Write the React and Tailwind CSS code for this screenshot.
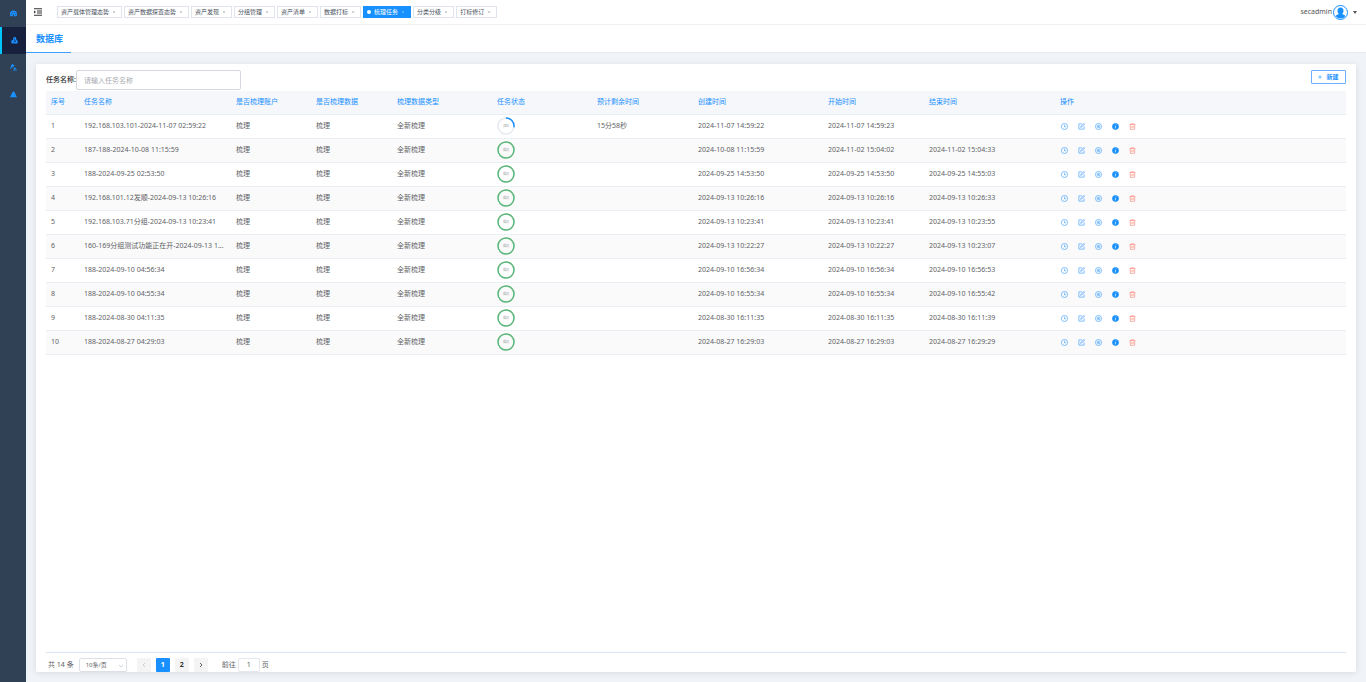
import React from 'react';

const tabs = [
  { label: '资产载体管理态势' },
  { label: '资产数据探查态势' },
  { label: '资产发现' },
  { label: '分组管理' },
  { label: '资产清单' },
  { label: '数据打标' },
  { label: '梳理任务', active: true },
  { label: '分类分级' },
  { label: '打标修订' },
];

const columns = [
  { label: '序号', width: 'w-[33px]' },
  { label: '任务名称', width: 'w-[152px]' },
  { label: '是否梳理账户', width: 'w-[80px]' },
  { label: '是否梳理数据', width: 'w-[81px]' },
  { label: '梳理数据类型', width: 'w-[100px]' },
  { label: '任务状态', width: 'w-[100px]' },
  { label: '预计剩余时间', width: 'w-[101px]' },
  { label: '创建时间', width: 'w-[130px]' },
  { label: '开始时间', width: 'w-[101px]' },
  { label: '结束时间', width: 'w-[131px]' },
  { label: '操作', width: '' },
];

const tasks = [
  { name: '192.168.103.101-2024-11-07 02:59:22', percent: 28, left: '15分58秒', created: '2024-11-07 14:59:22', start: '2024-11-07 14:59:23', end: '' },
  { name: '187-188-2024-10-08 11:15:59', percent: 100, left: '', created: '2024-10-08 11:15:59', start: '2024-11-02 15:04:02', end: '2024-11-02 15:04:33' },
  { name: '188-2024-09-25 02:53:50', percent: 100, left: '', created: '2024-09-25 14:53:50', start: '2024-09-25 14:53:50', end: '2024-09-25 14:55:03' },
  { name: '192.168.101.12发顺-2024-09-13 10:26:16', percent: 100, left: '', created: '2024-09-13 10:26:16', start: '2024-09-13 10:26:16', end: '2024-09-13 10:26:33' },
  { name: '192.168.103.71分组-2024-09-13 10:23:41', percent: 100, left: '', created: '2024-09-13 10:23:41', start: '2024-09-13 10:23:41', end: '2024-09-13 10:23:55' },
  { name: '160-169分组测试功能正在开-2024-09-13 1...', percent: 100, left: '', created: '2024-09-13 10:22:27', start: '2024-09-13 10:22:27', end: '2024-09-13 10:23:07' },
  { name: '188-2024-09-10 04:56:34', percent: 100, left: '', created: '2024-09-10 16:56:34', start: '2024-09-10 16:56:34', end: '2024-09-10 16:56:53' },
  { name: '188-2024-09-10 04:55:34', percent: 100, left: '', created: '2024-09-10 16:55:34', start: '2024-09-10 16:55:34', end: '2024-09-10 16:55:42' },
  { name: '188-2024-08-30 04:11:35', percent: 100, left: '', created: '2024-08-30 16:11:35', start: '2024-08-30 16:11:35', end: '2024-08-30 16:11:39' },
  { name: '188-2024-08-27 04:29:03', percent: 100, left: '', created: '2024-08-27 16:29:03', start: '2024-08-27 16:29:03', end: '2024-08-27 16:29:29' },
];

const menu = [
  {
    label: '态势',
    icon: (
      <svg viewBox="0 0 16 16" className="h-[7px] w-[7px]" fill="currentColor">
        <path fillRule="evenodd" d="M8 1a8 8 0 0 0-8 8c0 1.500.4 3.800 1 5h5l2-6 1 6h6c.6-1.200 1-3.500 1-5a8 8 0 0 0-8-8zM3 8.500h2v2H3zM5 4.500h2v2H5zM10 5h2v2h-2zM12 9h2v2h-2z" />
      </svg>
    ),
  },
  {
    label: '资产梳理',
    active: true,
    icon: (
      <svg viewBox="0 0 16 16" className="h-[7px] w-[7px]" fill="currentColor">
        <path fillRule="evenodd" d="M8 0c2.500 0 4 1.500 4 4v2c2 .5 3.500 2.500 3.500 5S15 15 13 15H3c-2 0-2.500-1.500-2.500-4S2 7.500 4 7l1-1V4c0-2 1-4 3-4zM8 4v4L5 13h1l2.500-4 2.500 3V9L9 7V4z" />
      </svg>
    ),
  },
  {
    label: '风险审计',
    icon: (
      <svg viewBox="0 0 16 16" className="h-[7px] w-[7px]" fill="currentColor">
        <path d="M5 0l5 3-2 4-2-1-4 5-2-1 3-5-1-1zM9 8l5 1-1 3H8zM7 13h9v2H7z" />
      </svg>
    ),
  },
  {
    label: '告警',
    icon: (
      <svg viewBox="0 0 16 16" className="h-[7px] w-[7px]" fill="currentColor">
        <path d="M8 1c1 0 2 .5 2.500 2L16 14H0L5.500 3C6 1.500 7 1 8 1z" />
      </svg>
    ),
  },
];

const actions = [
  {
    label: '历史',
    color: 'text-[#409eff]',
    icon: (
      <>
        <circle cx="8" cy="8" r="7" />
        <path d="M8 4v4.500h3.500" />
      </>
    ),
  },
  {
    label: '编辑',
    color: 'text-[#409eff]',
    icon: (
      <>
        <path d="M9 2H2v12h12V8" />
        <path d="M6 10l1-2.500L13.500 1 15 2.500 8.500 9z" />
      </>
    ),
  },
  {
    label: '执行',
    color: 'text-[#409eff]',
    icon: (
      <>
        <circle cx="8" cy="8" r="7" />
        <circle cx="8" cy="8" r="3" />
        <circle cx="8" cy="8" r="1" />
      </>
    ),
  },
  {
    label: '详情',
    color: 'text-[#1890ff]',
    icon: (
      <>
        <circle cx="8" cy="8" r="7" fill="currentColor" />
        <path d="M9 3.500L8.700 5M8.500 6.500L7.300 12.500" stroke="#fff" />
      </>
    ),
  },
  {
    label: '删除',
    color: 'text-[#ff8a7a]',
    icon: (
      <>
        <path d="M1 3.500h14M3 3.500v11h10v-11M5.500 3V1.500h5V3M6.500 6.500v5M9.500 6.500v5" />
      </>
    ),
  },
];

function Sidebar() {
  return (
    <aside className="w-[26px] shrink-0 bg-[#304156]">
      <nav className="flex flex-col">
        {menu.map((item) => (
          <a
            key={item.label}
            href="#menu"
            aria-label={item.label}
            className={`flex h-[27px] items-center justify-center text-[#1890ff] ${
              item.active ? 'border-l-2 border-[#00c6ff] bg-[#17203d]' : ''
            }`}
          >
            {item.icon}
          </a>
        ))}
      </nav>
    </aside>
  );
}

function Header() {
  return (
    <header className="flex h-[25px] items-center border-b border-[#f0f1f3] bg-white">
      <button aria-label="折叠菜单" className="ml-2 text-[#333]">
        <svg viewBox="0 0 16 16" className="h-2 w-2" fill="none" stroke="currentColor" strokeWidth="2">
          <path d="M0 1.500h16M6 6h10M6 10h10M0 14.500h16" />
          <path d="M0 5l4 3-4 3z" fill="currentColor" stroke="none" />
        </svg>
      </button>
      <nav className="ml-[15px] flex gap-[2px]">
        {tabs.map((tab) => (
          <a
            key={tab.label}
            href="#tab"
            className={`flex h-3 items-center border pr-[6px] pl-[3px] text-[6px] whitespace-nowrap ${
              tab.active ? 'border-[#1890ff] bg-[#1890ff] text-white' : 'border-[#e0e4ec] bg-white text-[#495060]'
            }`}
          >
            {tab.active && <span className="mr-[3px] h-1 w-1 rounded-full bg-white" />}
            {tab.label}
            <svg viewBox="0 0 4 4" className="ml-1 h-[2px] w-[2px] opacity-70" stroke="currentColor" strokeWidth="1">
              <path d="M.5.5l3 3M3.500.5l-3 3" />
            </svg>
          </a>
        ))}
      </nav>
      <button className="mr-[9px] ml-auto flex items-center text-[7px] text-[#555]">
        secadmin
        <svg viewBox="0 0 30 30" className="ml-px h-[15px] w-[15px]">
          <circle cx="15" cy="15" r="14" fill="#fff" stroke="#1890ff" strokeWidth="2" />
          <path d="M15 5c4 0 6 3 6 6.500 0 2.500-1 4.500-2.500 6 .5 1.500 5 2 6.500 4.500A12.500 12.500 0 0 1 5 22c1.500-2.500 6-3 6.500-4.500C10 16 9 14 9 11.500 9 8 11 5 15 5z" fill="#1890ff" />
        </svg>
        <svg viewBox="0 0 8 6" className="ml-[5px] h-[3px] w-1" fill="#555">
          <path d="M0 0h8L4 6z" />
        </svg>
      </button>
    </header>
  );
}

function Progress({ percent }) {
  const done = percent === 100;
  return (
    <span className="relative flex h-[18px] w-[18px] items-center justify-center">
      <svg viewBox="0 0 36 36" className="absolute inset-0 h-full w-full -rotate-90" fill="none" strokeWidth="3">
        <circle cx="18" cy="18" r="16" stroke="#e5e9f2" />
        <circle
          cx="18"
          cy="18"
          r="16"
          pathLength="100"
          stroke={done ? '#5ab877' : '#1890ff'}
          strokeDasharray={`${percent} 100`}
        />
      </svg>
      <span className="text-[3px] text-[#909399]">{done ? '成功' : `${percent}%`}</span>
    </span>
  );
}

function TaskTable() {
  return (
    <table className="w-full table-fixed text-left text-[7px] leading-[10px] text-[#606266]">
      <thead className="bg-[#f5f7fa] text-[#1890ff]">
        <tr className="h-[23px] border-b border-[#ebeef5]">
          {columns.map((col) => (
            <th key={col.label} className={`px-[5px] py-0 font-normal ${col.width}`}>
              {col.label}
            </th>
          ))}
        </tr>
      </thead>
      <tbody>
        {tasks.map((task, i) => (
          <tr key={task.name} className="h-6 border-b border-[#ebeef5] even:bg-[#fafafa]">
            <td className="px-[5px] py-0">{i + 1}</td>
            <td className="truncate px-[5px] py-0">{task.name}</td>
            <td className="px-[5px] py-0">梳理</td>
            <td className="px-[5px] py-0">梳理</td>
            <td className="px-[5px] py-0">全新梳理</td>
            <td className="px-[5px] py-0">
              <Progress percent={task.percent} />
            </td>
            <td className="px-[5px] py-0">{task.left}</td>
            <td className="px-[5px] py-0">{task.created}</td>
            <td className="px-[5px] py-0">{task.start}</td>
            <td className="px-[5px] py-0">{task.end}</td>
            <td className="px-[5px] py-0">
              <div className="flex w-[76px] justify-between pl-px">
                {actions.map((action) => (
                  <button key={action.label} aria-label={action.label} className={action.color}>
                    <svg viewBox="0 0 16 16" className="block h-[7px] w-[7px]" fill="none" stroke="currentColor" strokeWidth="1.500">
                      {action.icon}
                    </svg>
                  </button>
                ))}
              </div>
            </td>
          </tr>
        ))}
      </tbody>
    </table>
  );
}

function Pagination() {
  return (
    <div className="flex h-5 items-end border-t border-[#d4e6f7] pl-[2px] text-[7px] leading-[14px] text-[#606266]">
      <span>共 14 条</span>
      <div className="relative ml-[5px]">
        <select
          aria-label="每页条数"
          className="block h-[14px] w-12 appearance-none rounded-[2px] border border-[#dcdfe6] bg-white px-[6px] text-[6px] leading-3"
        >
          <option>10条/页</option>
        </select>
        <svg viewBox="0 0 8 8" className="pointer-events-none absolute top-[6px] right-1 h-1 w-1" fill="none" stroke="#c0c4cc" strokeWidth="1.500">
          <path d="M0 2l4 4 4-4" />
        </svg>
      </div>
      <div className="ml-[10px] flex gap-[5px] font-bold text-[#303133]">
        <button aria-label="上一页" className="flex h-[14px] w-[14px] items-center justify-center rounded-[1px] bg-[#f4f4f5] text-[#c0c4cc]">
          <svg viewBox="0 0 8 8" className="h-1 w-1" fill="none" stroke="currentColor" strokeWidth="1.500">
            <path d="M6 0L2 4l4 4" />
          </svg>
        </button>
        <button className="h-[14px] w-[14px] rounded-[1px] bg-[#1890ff] text-white">1</button>
        <button className="h-[14px] w-[14px] rounded-[1px] bg-[#f4f4f5]">2</button>
        <button aria-label="下一页" className="flex h-[14px] w-[14px] items-center justify-center rounded-[1px] bg-[#f4f4f5]">
          <svg viewBox="0 0 8 8" className="h-1 w-1" fill="none" stroke="currentColor" strokeWidth="1.500">
            <path d="M2 0l4 4-4 4" />
          </svg>
        </button>
      </div>
      <label className="ml-[14px] flex items-end gap-[2px]">
        前往
        <input defaultValue="1" className="h-[14px] w-[22px] rounded-[2px] border border-[#e4e7ed] text-center" />
        页
      </label>
    </div>
  );
}

export default function App() {
  return (
    <div className="flex min-h-screen bg-[#f0f4f8] font-['Noto_Sans','Noto_Sans_CJK_SC',sans-serif]">
      <Sidebar />
      <div className="flex min-w-0 flex-1 flex-col">
        <Header />
        <div className="flex h-7 border-b border-[#e8ebf0] bg-white">
          <a href="#db" className="-mb-px flex w-[45px] items-center border-b border-[#409eff] pl-[10px] text-[9px] font-bold whitespace-nowrap text-[#1890ff]">
            数据库
          </a>
        </div>
        <main className="mx-[10px] mt-[11px] mb-[10px] flex flex-1 flex-col rounded-[2px] bg-white px-[10px] pt-[6px] shadow-[0_1px_6px_rgba(0,0,0,0.1)]">
          <div className="mb-px flex items-start justify-between">
            <label className="flex items-center text-[7px] font-medium text-[#303133]">
              任务名称:
              <input
                placeholder="请输入任务名称"
                className="h-5 w-[165px] rounded-[2px] border border-[#d5d8de] px-[7px] font-normal placeholder:text-[#a8abb2]"
              />
            </label>
            <button className="flex h-[14px] w-[35px] items-center justify-center gap-1 rounded-[1px] border border-[#69b1ff] text-[6px] font-bold text-[#1890ff]">
              <svg viewBox="0 0 8 8" className="h-1 w-1" stroke="currentColor" strokeWidth="1">
                <path d="M4 0v8M0 4h8" />
              </svg>
              新建
            </button>
          </div>
          <TaskTable />
          <div className="mt-auto">
            <Pagination />
          </div>
        </main>
      </div>
    </div>
  );
}
